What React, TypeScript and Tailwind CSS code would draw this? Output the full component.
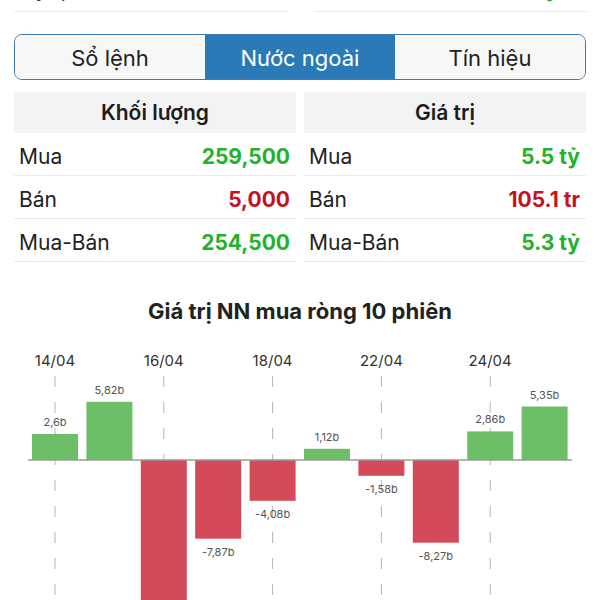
import React from 'react'

const font = { fontFamily: 'Inter, "Noto Sans", sans-serif' }

const tabs = ['Sổ lệnh', 'Nước ngoài', 'Tín hiệu']

const volumeRows = [
  { label: 'Mua', value: '259,500', up: true },
  { label: 'Bán', value: '5,000', up: false },
  { label: 'Mua-Bán', value: '254,500', up: true },
]

const valueRows = [
  { label: 'Mua', value: '5.5 tỷ', up: true },
  { label: 'Bán', value: '105.1 tr', up: false },
  { label: 'Mua-Bán', value: '5.3 tỷ', up: true },
]

const sessions = [
  { date: '14/04', v: 2.6, label: '2,6b' },
  { date: '15/04', v: 5.82, label: '5,82b' },
  { date: '16/04', v: -16.4, label: '' },
  { date: '17/04', v: -7.87, label: '-7,87b' },
  { date: '18/04', v: -4.08, label: '-4,08b' },
  { date: '19/04', v: 1.12, label: '1,12b' },
  { date: '22/04', v: -1.58, label: '-1,58b' },
  { date: '23/04', v: -8.27, label: '-8,27b' },
  { date: '24/04', v: 2.86, label: '2,86b' },
  { date: '25/04', v: 5.35, label: '5,35b' },
]

function StatTable({ title, rows }: { title: string; rows: typeof volumeRows }) {
  return (
    <div className="flex flex-col">
      <div className="h-[41px] bg-[#f3f3f3] flex items-center justify-center text-[21px] font-semibold text-[#1c1c1c]">
        {title}
      </div>
      {rows.map((r) => (
        <div key={r.label} className="h-[43px] flex items-center justify-between pt-[5px] pl-[5px] pr-[6px] border-b border-[#ececec]">
          <span className="text-[21px] text-[#222]">{r.label}</span>
          <span className={`text-[21px] font-bold ${r.up ? 'text-[#22b12b]' : 'text-[#c4121f]'}`}>{r.value}</span>
        </div>
      ))}
    </div>
  )
}

function NetChart() {
  const zero = 120
  const scale = 10
  const step = 54.4
  const w = 46
  return (
    <svg width="600" height="260" viewBox="0 0 600 260" className="block">
      {sessions.map((s, i) =>
        i % 2 === 0 ? (
          <g key={s.date}>
            <text x={55 + step * i} y={26} textAnchor="middle" fontSize="15" fill="#333" style={font}>
              {s.date}
            </text>
            <line x1={55 + step * i} y1={36} x2={55 + step * i} y2={260} stroke="#b5b5b5" strokeWidth="1" strokeDasharray="11 15" />
          </g>
        ) : null
      )}
      {sessions.map((s, i) => {
        const cx = 55 + step * i
        const h = Math.abs(s.v) * scale
        const up = s.v >= 0
        const y = up ? zero - h : zero
        return (
          <g key={'b' + s.date}>
            <rect x={cx - w / 2} y={y} width={w} height={h} fill={up ? '#6cbf66' : '#d54a58'} />
            {s.label && (
              <text x={cx} y={up ? y - 8 : zero + h + 17} textAnchor="middle" fontSize="11" fill="#555" style={font}>
                {s.label}
              </text>
            )}
          </g>
        )
      })}
      <line x1="28" y1={zero} x2="572" y2={zero} stroke="#9a9a9a" strokeWidth="1.5" />
    </svg>
  )
}

export default function App() {
  return (
    <div className="w-[600px] h-[600px] overflow-hidden bg-white" style={font}>
      <div className="h-[12px] flex gap-[28px] pl-[14px] pr-[12px] overflow-hidden">
        <div className="flex-1 border-b border-[#ececec] overflow-hidden">
          <div className="mt-[-22px] pl-[10px] text-[20px] leading-[24px] text-[#222]">Tỷ lệ</div>
        </div>
        <div className="flex-1 border-b border-[#ececec] overflow-hidden">
          <div className="mt-[-22px] pr-[30px] text-right text-[20px] leading-[24px] font-bold text-[#22b12b]">12.5 tỷ</div>
        </div>
      </div>

      <div className="mt-[22px] mx-[14px] h-[46px] border border-[#3a7db4] rounded-[8px] overflow-hidden grid grid-cols-3">
        {tabs.map((t, i) => (
          <div
            key={t}
            className={`flex items-center justify-center pt-[2px] text-[22px] ${
              i === 1 ? 'bg-[#2a7ab8] text-white' : 'bg-[#f7f7f7] text-[#222]'
            }`}
          >
            {t}
          </div>
        ))}
      </div>

      <div className="mt-[12px] mx-[14px] grid grid-cols-2 gap-[8px]">
        <StatTable title="Khối lượng" rows={volumeRows} />
        <StatTable title="Giá trị" rows={valueRows} />
      </div>

      <div className="mt-[33px] text-center text-[22px] font-bold text-[#222]">Giá trị NN mua ròng 10 phiên</div>

      <div className="mt-[12px]">
        <NetChart />
      </div>
    </div>
  )
}
